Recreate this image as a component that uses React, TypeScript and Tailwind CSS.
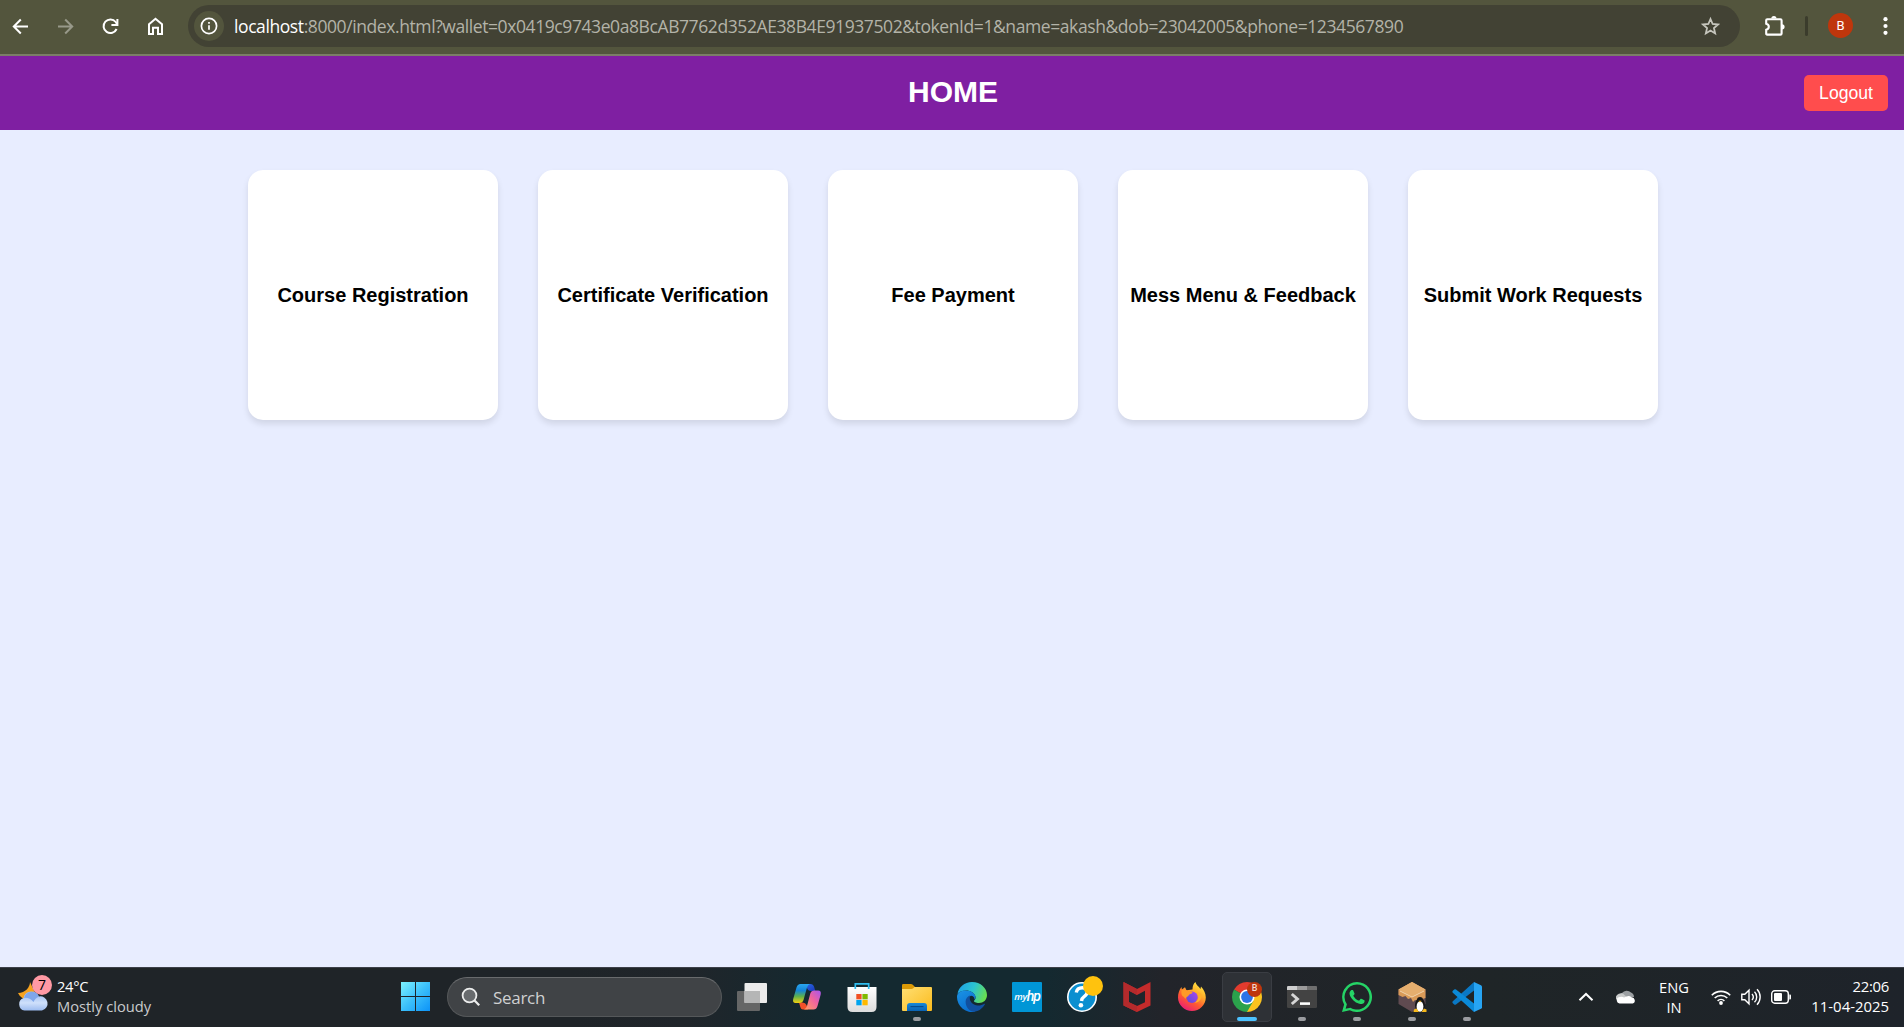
import React from "react";

const UI_FONT = "font-['Open_Sans','Noto_Sans',sans-serif]";
const PAGE_FONT = "font-['Liberation_Sans',Arial,sans-serif]";

function BrowserBar() {
  return (
    <div className={`flex h-14 shrink-0 items-center border-b-2 border-[#7c7d68] bg-[#53553d] pb-[3px] ${UI_FONT}`}>
      <div className="flex w-[188px] shrink-0 items-center gap-[25px] pl-[10px]">
        <svg className="size-5" viewBox="0 0 20 20" fill="none" stroke="#fff" strokeWidth="2">
          <path d="M18 10.5H4M10.8 3.5L3.8 10.5l7 7" />
        </svg>
        <svg className="size-5" viewBox="0 0 20 20" fill="none" stroke="#98998a" strokeWidth="2">
          <path d="M3 10.5h14M10.2 3.5l7 7-7 7" />
        </svg>
        <svg className="size-5" viewBox="0 0 20 20" fill="none" stroke="#fff" strokeWidth="2">
          <path d="M16.6 13A6.8 6.8 0 1 1 15.7 6L17 8" />
          <path d="M17.4 3v6h-6" />
        </svg>
        <svg className="size-5" viewBox="0 0 20 20" fill="none" stroke="#fff" strokeWidth="2">
          <path d="M4 8.2l6.5-5.5L17 8.2v9.9h-4v-6.3H8v6.3H4z" />
        </svg>
      </div>
      <div className="flex h-[42px] w-[1552px] shrink-0 items-center rounded-full bg-[#424234] pr-5 pl-1.5">
        <div className="flex size-[30px] shrink-0 items-center justify-center rounded-full bg-[#53553d]">
          <svg className="size-[18px]" viewBox="0 0 18 18" fill="none" stroke="#fff" strokeWidth="1.7">
            <circle cx="9" cy="9" r="7.6" />
            <path d="M9 8.2v4.6M9 5v1.8" />
          </svg>
        </div>
        <div className="mt-px ml-[10px] flex-1 whitespace-nowrap text-[17.5px] leading-6 tracking-[-0.41px] text-[#b3b3a8]">
          <span className="text-white">localhost</span>
          :8000/index.html?wallet=0x0419c9743e0a8BcAB7762d352AE38B4E91937502&amp;tokenId=1&amp;name=akash&amp;dob=23042005&amp;phone=1234567890
        </div>
        <svg className="size-5" viewBox="0 0 20 20" fill="none" stroke="#c6c6bd" strokeWidth="1.8">
          <path d="M10.5 3l2.15 5 5.4.5-4.1 3.6 1.2 5.3-4.65-2.8-4.65 2.8 1.2-5.3L2.95 8.5l5.4-.5z" />
        </svg>
      </div>
      <div className="flex flex-1 items-center pl-[22px]">
        <svg className="-mt-px size-6" viewBox="0 0 24 24">
          <path
            d="M5.2 6.2h13.200q1.200 0 1.200 1.200v13q0 1.200-1.200 1.200H5.200q-1 0-1-1.200v-3.600q2.600-.7 2.600-3t-2.600-3V7.200q0-1 1-1z"
            fill="none"
            stroke="#fff"
            strokeWidth="2.1"
          />
          <path d="M9.300 5.600a2.600 2.600 0 0 1 5.200 0zM20 11.200a2.600 2.600 0 0 1 0 5.200z" fill="#fff" />
        </svg>
        <div className="ml-[19px] h-5 w-[3px] rounded-sm bg-[#3b3c2c]" />
        <div className="ml-5 flex size-[25px] items-center justify-center rounded-full bg-[#bf360c] text-[13px] text-white font-['Roboto',sans-serif]">
          B
        </div>
        <svg className="ml-[30px] h-5 w-[5px]" viewBox="0 0 5 20" fill="#fff">
          <circle cx="2.5" cy="3.2" r="2.1" />
          <circle cx="2.5" cy="10" r="2.1" />
          <circle cx="2.5" cy="16.8" r="2.1" />
        </svg>
      </div>
    </div>
  );
}

const CARDS = [
  "Course Registration",
  "Certificate Verification",
  "Fee Payment",
  "Mess Menu & Feedback",
  "Submit Work Requests",
];

function HomePage() {
  return (
    <div className={`flex flex-1 flex-col bg-[#e8edff] ${PAGE_FONT}`}>
      <header className="grid h-[74px] shrink-0 grid-cols-[1fr_auto_1fr] items-center bg-[#7f1fa2] pr-4 pl-[18px] text-white">
        <div />
        <h1 className="pb-0.5 text-[30px] leading-[34px] font-bold">HOME</h1>
        <button className="h-9 w-[84px] justify-self-end rounded-[5px] bg-[#ff4d4d] text-[17.6px] leading-5">
          Logout
        </button>
      </header>
      <main className="flex justify-center gap-10 pt-10 pl-0.5">
        {CARDS.map((title) => (
          <div
            key={title}
            className="flex size-[250px] items-center justify-center rounded-[15px] bg-white text-center text-xl whitespace-nowrap font-bold text-black shadow-[0_4px_6px_rgba(0,0,0,0.1)]"
          >
            {title}
          </div>
        ))}
      </main>
    </div>
  );
}

function TaskViewIcon() {
  return (
    <svg viewBox="0 0 30 30" className="size-[30px]">
      <rect x="0" y="9" width="23" height="20" rx="1" fill="#656666" />
      <rect x="7.5" y="1" width="22.5" height="20" rx="1" fill="#ececec" />
      <rect x="7.5" y="9" width="15.5" height="12" fill="#b5b6b6" />
    </svg>
  );
}

function CopilotIcon() {
  return (
    <svg viewBox="0 0 30 30" className="size-[30px]">
      <defs>
        <linearGradient id="cpA" x1="0" y1="0" x2="0" y2="1">
          <stop offset="0" stopColor="#2aa6f0" />
          <stop offset=".35" stopColor="#1585d6" />
          <stop offset=".65" stopColor="#5db04c" />
          <stop offset="1" stopColor="#f2d011" />
        </linearGradient>
        <linearGradient id="cpB" x1="1" y1="0" x2="0" y2="1">
          <stop offset="0" stopColor="#a656f0" />
          <stop offset=".45" stopColor="#ee62a0" />
          <stop offset="1" stopColor="#ffa060" />
        </linearGradient>
        <linearGradient id="cpC" x1="0" y1="0" x2="1" y2="1">
          <stop offset="0" stopColor="#2a6be8" />
          <stop offset="1" stopColor="#1a37b8" />
        </linearGradient>
      </defs>
      <path d="M13 2h6q2.200 0 3 2.500L23.300 9h-4.500Q16 9 15 6z" fill="url(#cpC)" />
      <path d="M16 27.500h-5q-2 0-2.700-2.500L7 20.500h3.500q3 0 4 2.500z" fill="#f0502a" />
      <path d="M8.500 2H18q-2.200.7-3 3.500L11.500 18q-.9 3-4 3H3.600Q.3 21 1.200 17L4.500 5.500Q5.500 2 8.500 2z" fill="url(#cpA)" />
      <path d="M21.500 27.500H12q2.200-.7 3-3.500L18.300 11.500q.9-3 4-3h3.900q3.300 0 2.500 4L25.500 24q-1 3.500-4 3.500z" fill="url(#cpB)" />
    </svg>
  );
}

function StoreIcon() {
  return (
    <svg viewBox="0 0 30 30" className="size-[30px]">
      <defs>
        <linearGradient id="st" x1="0" y1="0" x2="0" y2="1">
          <stop offset="0" stopColor="#fff" />
          <stop offset="1" stopColor="#dcdcdc" />
        </linearGradient>
      </defs>
      <path d="M.5 5h29v20q0 5-5 5h-19q-5 0-5-5z" fill="url(#st)" />
      <path d="M8.300 7V1.800h13.400V7" fill="none" stroke="#2fbdf0" strokeWidth="1.700" />
      <rect x="9.300" y="12" width="5.300" height="5.300" fill="#f25022" />
      <rect x="15.400" y="12" width="5.300" height="5.300" fill="#7fba00" />
      <rect x="9.300" y="18" width="5.300" height="5.300" fill="#00a4ef" />
      <rect x="15.400" y="18" width="5.300" height="5.300" fill="#ffb900" />
    </svg>
  );
}

function ExplorerIcon() {
  return (
    <svg viewBox="0 0 30 30" className="size-[30px]">
      <defs>
        <linearGradient id="fx" x1="0" y1="0" x2="1" y2="1">
          <stop offset="0" stopColor="#ffdf73" />
          <stop offset="1" stopColor="#fbbb1d" />
        </linearGradient>
        <linearGradient id="fb" x1="0" y1="0" x2="0" y2="1">
          <stop offset="0" stopColor="#1888d8" />
          <stop offset="1" stopColor="#0a63b4" />
        </linearGradient>
      </defs>
      <path d="M0 3.200Q0 2 1.200 2H9q1 0 1.800.8L13 5v5H0z" fill="#dc9a06" />
      <path d="M0 7h9.500q1 0 1.800-.8L12.500 5H29q1 0 1 1v22q0 1-1 1H1q-1 0-1-1z" fill="url(#fx)" />
      <path d="M5 29v-5q0-3 3-3h14q3 0 3 3v5z" fill="url(#fb)" />
      <path d="M8.500 24.600h13" stroke="#084a8c" strokeWidth="1.100" />
    </svg>
  );
}

function EdgeIcon() {
  return (
    <svg viewBox="0 0 30 30" className="size-[30px]">
      <defs>
        <linearGradient id="eg1" x1="0" y1=".3" x2="1" y2=".6">
          <stop offset="0" stopColor="#1fa3e6" />
          <stop offset=".5" stopColor="#2cc4d0" />
          <stop offset="1" stopColor="#6be04a" />
        </linearGradient>
        <linearGradient id="eg2" x1="0" y1="0" x2=".5" y2="1">
          <stop offset="0" stopColor="#1a93e6" />
          <stop offset="1" stopColor="#0b6fcf" />
        </linearGradient>
      </defs>
      <path d="M.5 12C1.500 5 7.500 0 15 0c8.800 0 15 6.200 15 13 0 5-3.800 8-8 8-3 0-5.500-1-5-2.200 1.500-1.500 1.800-2.600 1.500-4C17.800 11 13.500 8.500 9 8.500c-4 0-7 1.500-8.500 3.500z" fill="url(#eg1)" />
      <path d="M0 15C0 11 3.500 8.500 8.500 8.500c5.500 0 9.500 3 10 6.300.2 1.200-.3 2.200-1 3 0-3-1.500-4-3.500-4-6 2-6 13 4.500 15.800A15 15 0 0 1 0 15z" fill="url(#eg2)" />
      <path d="M8.600 19.500c0-3 2-5.300 4.600-6-1.800 5 2 9.900 7.800 9.900 2.700 0 4.600-.7 6-1.500 1-.5 1 .1.700.8A15 15 0 0 1 17 29.800c-5-.5-8.400-5-8.400-10.300z" fill="#11509f" />
    </svg>
  );
}

function MyHpIcon() {
  return (
    <div className="flex size-[30px] items-center justify-center rounded-[1px] bg-[#0096d6] text-white">
      <span className="text-[9.5px] leading-3 font-semibold italic tracking-[-0.3px] font-['Open_Sans',sans-serif]">my</span>
      <span className="-mt-px text-[14px] leading-3 font-medium italic tracking-[-1.2px] font-['Roboto',sans-serif]">hp</span>
    </div>
  );
}

function HelpIcon() {
  return (
    <div className="relative size-[30px]">
      <svg viewBox="0 0 30 30" className="size-[30px]">
        <circle cx="15" cy="15" r="14.200" fill="#0b8fd0" stroke="#fff" strokeWidth="1.600" />
        <path d="M9.300 10.500q.8-4.700 6-4.700 5 0 5 4 0 2.700-3.200 4.800-2.300 1.500-2.600 4.400" fill="none" stroke="#fff" strokeWidth="3.400" />
        <circle cx="13.900" cy="23.200" r="2.300" fill="#fff" />
      </svg>
      <div className="absolute -top-1.5 left-4 size-5 rounded-full bg-[#ffc20e]" />
    </div>
  );
}

function McAfeeIcon() {
  return (
    <svg viewBox="0 0 30 30" className="size-[30px]">
      <path d="M1.500 0L15 7 28.500 0v23.500L15 30 1.500 23.500zM7 8.700v11.600l8 3.800 8-3.800V8.700l-8 4.200z" fill="#c42b2b" fillRule="evenodd" />
      <path d="M1.500 0L15 7v5.900L7 8.700v11.600l8 3.800V30L1.500 23.500z" fill="#b42a2c" />
    </svg>
  );
}

function FirefoxIcon() {
  return (
    <svg viewBox="0 0 30 30" className="size-[30px]">
      <defs>
        <linearGradient id="ff" x1=".85" y1="0" x2=".25" y2="1">
          <stop offset="0" stopColor="#fff04a" />
          <stop offset=".35" stopColor="#ffb02a" />
          <stop offset=".65" stopColor="#ff5a30" />
          <stop offset="1" stopColor="#e8187c" />
        </linearGradient>
        <linearGradient id="ffp" x1="1" y1="0" x2="0" y2="1">
          <stop offset="0" stopColor="#a848f0" />
          <stop offset="1" stopColor="#5a4ad8" />
        </linearGradient>
      </defs>
      <path d="M18.500 0c.8 3.500 3.500 4.500 5 7l.5-2.500c3 3 4.800 7 4.800 11C28.800 23 22.500 29 15 29S1 23 1 15.500c0-4 1.200-7.500 3.500-10.500l.4 2.500L8 5.200l1.500 3 6-.7C15.500 4 16.500 1.500 18.500 0z" fill="url(#ff)" />
      <circle cx="15" cy="15.200" r="5.700" fill="url(#ffp)" />
      <path d="M4.800 7.500l4.700.7c1 .8 2.300 1.500 4.800 1.600 2 .1 1.200 1.800-.8 2.300-2 .4-1.500 2.400-4 2.900-.5 2.500-2 1.500-2.500 0C4.500 14 3.800 11 4.800 7.500z" fill="#ff9a28" />
      <path d="M20 11c2.500 3 1.500 8-2.500 9.500 4 .5 7.500-3 7-7.500-.3-2-2-3.500-4.500-2z" fill="#ffb02a" />
    </svg>
  );
}

function ChromeIcon() {
  return (
    <div className="relative size-[30px]">
      <svg viewBox="0 0 30 30" className="size-[30px]">
        <path d="M15 15L2.010 7.500A15 15 0 0 1 27.990 7.500z" fill="#e33b2e" />
        <path d="M15 15V30A15 15 0 0 0 27.990 7.500H15z" fill="#fcc31e" />
        <path d="M15 15L2.010 7.500A15 15 0 0 0 15 30l6.500-11.250z" fill="#2ba24c" />
        <circle cx="15" cy="15" r="7.500" fill="#fff" />
        <circle cx="15" cy="15" r="5.900" fill="#2d74e8" />
      </svg>
      <div className="absolute top-0 left-[15px] flex size-[15px] items-center justify-center rounded-full bg-[#bf360c] text-[9px] font-medium text-[#f3d9d0] font-['Roboto',sans-serif]">
        B
      </div>
    </div>
  );
}

function TerminalIcon() {
  return (
    <svg viewBox="0 0 30 30" className="size-[30px]">
      <rect x="0" y="4" width="30" height="22" rx="1.200" fill="#434343" />
      <path d="M0 8V5.200Q0 4 1.200 4H10v4z" fill="#cfcfcf" />
      <path d="M10 4h10v4H10z" fill="#9b9b9b" />
      <path d="M20 4h8.800Q30 4 30 5.200V8H20z" fill="#6f6f6f" />
      <path d="M4.800 12l5.600 5-5.600 5" fill="none" stroke="#d6d6d6" strokeWidth="3" />
      <path d="M13 21.600h10" stroke="#fff" strokeWidth="2.600" />
    </svg>
  );
}

function WhatsAppIcon() {
  return (
    <svg viewBox="0 0 24 24" className="size-[30px]" fill="#25d366">
      <path d="M17.472 14.382c-.297-.149-1.758-.867-2.030-.967-.273-.099-.471-.148-.670.150-.197.297-.767.966-.940 1.164-.173.199-.347.223-.644.075-.297-.150-1.255-.463-2.390-1.475-.883-.788-1.480-1.761-1.653-2.059-.173-.297-.018-.458.130-.606.134-.133.298-.347.446-.520.149-.174.198-.298.298-.497.099-.198.050-.371-.025-.520-.075-.149-.669-1.612-.916-2.207-.242-.579-.487-.500-.669-.510-.173-.008-.371-.010-.570-.010-.198 0-.520.074-.792.372-.272.297-1.040 1.016-1.040 2.479 0 1.462 1.065 2.875 1.213 3.074.149.198 2.096 3.200 5.077 4.487.709.306 1.262.489 1.694.625.712.227 1.360.195 1.871.118.571-.085 1.758-.719 2.006-1.413.248-.694.248-1.289.173-1.413-.074-.124-.272-.198-.570-.347z" />
      <path d="M12 0A12 12 0 0 0 1.700 18.050L0 24l6.200-1.500A12 12 0 1 0 12 0zm0 2a10 10 0 1 1-5.300 18.500L2.900 21.400l1-3.700A10 10 0 0 1 12 2z" />
    </svg>
  );
}

function LinuxBoxIcon() {
  return (
    <svg viewBox="0 0 30 30" className="size-[30px]">
      <path d="M15 0l13.500 7.500v14.500L15 30 1.500 22V7.500z" fill="#5f4a50" />
      <path d="M15 0l13.500 7.500V16l-3 1-2.500-1-2 3-3-1-2 2-2-4-3 1-2.500-3-3 1-4-2V7.500z" fill="#d99a58" />
      <path d="M15 0l13.500 7.500L15 14.500 1.500 7.500z" fill="#e5ae6e" />
      <path d="M3 9l12 6 12-6" fill="none" stroke="#f8e3c4" strokeWidth=".8" />
      <ellipse cx="23" cy="23" rx="5" ry="7" fill="#161616" />
      <circle cx="23" cy="18" r="3" fill="#161616" />
      <ellipse cx="23" cy="24.500" rx="3.400" ry="5.300" fill="#fff" />
      <path d="M21.500 18.800h3L23 20.400z" fill="#f6b81a" />
      <path d="M17 27.500l2.500-1 2.500 3.500h-5.500zM29.500 27.500l-2.500-1-2.500 3.500h5z" fill="#f6b81a" />
    </svg>
  );
}

function VsCodeIcon() {
  return (
    <svg viewBox="0 0 30 30" className="size-[30px]">
      <path d="M22 0v8.500L4 22.500Q3 23 2.200 22.400L.6 21Q0 20 .8 19.300z" fill="#0a78c4" />
      <path d="M22 30v-8.500L4 7.500Q3 7 2.200 7.600L.6 9Q0 10 .8 10.700z" fill="#0b8ad8" />
      <path d="M22 0l7 3.200q1 .5 1 1.600v20.400q0 1.100-1 1.600L22 30z" fill="#27a4f2" />
    </svg>
  );
}

type App = { name: string; icon: React.ReactNode; running?: boolean; active?: boolean };

const APPS: App[] = [
  { name: "Task view", icon: <TaskViewIcon /> },
  { name: "Copilot", icon: <CopilotIcon /> },
  { name: "Store", icon: <StoreIcon /> },
  { name: "Explorer", icon: <ExplorerIcon />, running: true },
  { name: "Edge", icon: <EdgeIcon /> },
  { name: "myHP", icon: <MyHpIcon /> },
  { name: "Help", icon: <HelpIcon /> },
  { name: "McAfee", icon: <McAfeeIcon /> },
  { name: "Firefox", icon: <FirefoxIcon /> },
  { name: "Chrome", icon: <ChromeIcon />, active: true },
  { name: "Terminal", icon: <TerminalIcon />, running: true },
  { name: "WhatsApp", icon: <WhatsAppIcon />, running: true },
  { name: "Linux", icon: <LinuxBoxIcon />, running: true },
  { name: "VS Code", icon: <VsCodeIcon />, running: true },
];

function Weather() {
  return (
    <div className="flex w-[401px] shrink-0 items-center pb-0.5 pl-[17px]">
      <div className="-mt-[7px] relative h-[40px] w-[36px]">
        <svg viewBox="0 0 36 40" className="h-10 w-9">
          <defs>
            <linearGradient id="wc" x1="0" y1="0" x2="0" y2="1">
              <stop offset="0" stopColor="#8fb4ee" />
              <stop offset=".6" stopColor="#cfe0fb" />
              <stop offset="1" stopColor="#9dbcf0" />
            </linearGradient>
          </defs>
          <path d="M13 10c0 5-4.500 11-12 11 2 4 5 6 8 6l10-4z" fill="#f5a21f" />
          <path d="M7.500 38.500a6.500 6.500 0 0 1-1-12.500 8 8 0 0 1 15.300-1.500A7 7 0 0 1 25 38.500z" fill="url(#wc)" />
          <path d="M7 26a8 8 0 0 1 15-1.500Q18 26 16.500 30 12 25 7 26z" fill="#7ea6ea" />
        </svg>
        <div className="absolute top-[3px] left-[15px] flex size-5 items-center justify-center rounded-full bg-[#ff99a4] text-[14px] leading-5 text-black">
          7
        </div>
      </div>
      <div className="ml-[4px] text-[14.7px] leading-5">
        <div className="tracking-[-0.3px] text-white">24°C</div>
        <div className="text-[#c9cbcd]">Mostly cloudy</div>
      </div>
    </div>
  );
}

function StartButton() {
  return (
    <svg viewBox="0 0 29 29" className="size-[29px] shrink-0">
      <defs>
        <linearGradient id="win" x1="0" y1="0" x2="1" y2="1">
          <stop offset="0" stopColor="#7cf2ff" />
          <stop offset=".5" stopColor="#3cc0fa" />
          <stop offset="1" stopColor="#0c93f8" />
        </linearGradient>
      </defs>
      <path d="M0 0h14v14H0zM15 0h14v14H15zM0 15h14v14H0zM15 15h14v14H15z" fill="url(#win)" />
    </svg>
  );
}

function SearchBox() {
  return (
    <div className="ml-[17px] flex h-10 w-[275px] shrink-0 items-center rounded-full border border-[#55585a] border-t-[#696b6d] bg-[#404346] pl-[13px]">
      <svg viewBox="0 0 20 20" className="size-5" fill="none" stroke="#eceded">
        <circle cx="8.500" cy="8.500" r="6.900" strokeWidth="1.800" fill="#686b6e" />
        <path d="M13.500 13.500l4.700 4.700" strokeWidth="2.300" />
      </svg>
      <span className="mt-0.5 ml-3 text-[17px] leading-6 tracking-[-0.3px] text-[#cfd0d1]">Search</span>
    </div>
  );
}

function Tray() {
  return (
    <div className="ml-auto flex items-center text-white">
      <svg viewBox="0 0 16 10" className="h-[10px] w-4" fill="none" stroke="#fff" strokeWidth="2">
        <path d="M1.500 8.200L8 2l6.500 6.200" />
      </svg>
      <svg viewBox="0 0 20 14" className="ml-[22px] h-[14px] w-5">
        <path d="M3 9a5 5 0 0 1 3-6 6 6 0 0 1 9-.5A5 5 0 0 1 18 7z" fill="#9b9fa2" />
        <path d="M0 9.500A5 5 0 0 1 9 5.500L13 8z" fill="#c8caca" />
        <path d="M3.500 13.500a3.400 3.400 0 0 1-1.500-6q4-1.500 6 0l3.500-1.300q2-.6 4 1.100A3.200 3.200 0 0 1 16.700 13.500z" fill="#fff" />
      </svg>
      <div className="mt-px ml-[22px] w-8 text-center text-[14.7px] leading-5">
        <div>ENG</div>
        <div>IN</div>
      </div>
      <svg viewBox="0 0 20 16" className="ml-[21px] h-4 w-5" fill="none" stroke="#fff" strokeWidth="1.600">
        <path d="M.8 6.200a13 13 0 0 1 18.400 0M3.700 9a9 9 0 0 1 12.600 0M6.600 11.800a5 5 0 0 1 6.800 0" />
        <circle cx="10" cy="14" r="1.900" fill="#fff" stroke="none" />
      </svg>
      <svg viewBox="0 0 20 18" className="ml-[10px] h-[18px] w-5" fill="none" stroke="#fff" strokeWidth="1.400">
        <path d="M.8 6.200h3l4.200-4v13.600l-4.200-4h-3z" />
        <path d="M11 6a4.500 4.500 0 0 1 0 6M13.500 3.700a7.500 7.500 0 0 1 0 10.600M16 1.300a11 11 0 0 1 0 15.400" />
      </svg>
      <svg viewBox="0 0 21 14" className="ml-[10px] h-[14px] w-[21px]">
        <rect x=".7" y=".8" width="16.600" height="12.400" rx="3" fill="none" stroke="#fff" strokeWidth="1.400" />
        <rect x="3" y="3" width="8" height="8" rx="1" fill="#fff" />
        <path d="M18.300 4.500h.8q.9 0 .9 1v3q0 1-.9 1h-.8z" fill="#fff" />
      </svg>
      <div className="mr-[15px] mb-0.5 ml-[19px] w-[78px] text-right whitespace-nowrap text-[14.9px] leading-5">
        <div className="tracking-[-0.3px]">22:06</div>
        <div>11-04-2025</div>
      </div>
    </div>
  );
}

function Taskbar() {
  return (
    <div
      className={`flex h-[60px] shrink-0 items-center border-t border-[#3d4049] bg-[linear-gradient(90deg,#1f2428_0%,#1f2428_30%,#20252a_36%,#142930_43%,#142930_55%,#22242a_61%,#1f2527_78%,#1e232a_100%)] pb-0.5 ${UI_FONT}`}
    >
      <Weather />
      <StartButton />
      <SearchBox />
      <div className="ml-[5px] flex shrink-0 gap-[5px]">
        {APPS.map((app) => (
          <div
            key={app.name}
            title={app.name}
            className={`relative flex size-[50px] items-center justify-center rounded-[5px] ${
              app.active ? "border border-[#3a3d43] bg-[#2e3136]" : ""
            }`}
          >
            {app.icon}
            {app.running && <div className="absolute bottom-px left-[21px] h-1 w-2 rounded-full bg-[#9a9ca0]" />}
            {app.active && <div className="absolute bottom-0 left-[14px] h-1 w-5 rounded-full bg-[#4cc2ff]" />}
          </div>
        ))}
      </div>
      <Tray />
    </div>
  );
}

export default function App() {
  return (
    <div className="flex h-[1027px] w-[1904px] flex-col overflow-hidden">
      <BrowserBar />
      <HomePage />
      <Taskbar />
    </div>
  );
}
